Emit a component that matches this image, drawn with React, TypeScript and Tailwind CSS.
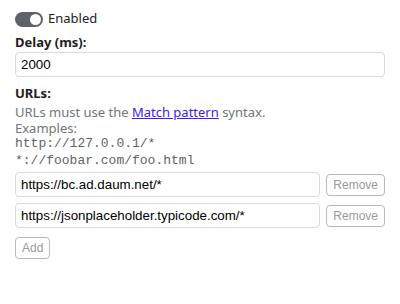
export default function App() {
  const urls = ["https://bc.ad.daum.net/*", "https://jsonplaceholder.typicode.com/*"];

  return (
    <div className="w-[400px] h-[304px] bg-white px-[15px] pt-[11px] text-[13px] text-[#202124] font-['Noto_Sans',sans-serif]">
      {/* Enabled toggle */}
      <label className="flex items-center gap-[5px] h-[16px]">
        <span className="relative w-[28px] h-[15px] rounded-full bg-[#5f6368]">
          <span className="absolute right-[2px] top-[2px] w-[11px] h-[11px] rounded-full bg-white" />
        </span>
        <span>Enabled</span>
      </label>

      {/* Delay */}
      <div className="mt-[6px] font-bold leading-[18px]">Delay (ms):</div>
      <input
        className="mt-[1px] block w-full h-[25px] px-[5px] border border-[#dadada] rounded-[4px] font-['Liberation_Sans',sans-serif] text-[13.33px] text-black outline-none"
        defaultValue="2000"
      />

      {/* URLs */}
      <div className="mt-[7px] font-bold leading-[18px]">URLs:</div>
      <div className="text-[#70757a] leading-[16px] mt-[2px]">
        <div>
          URLs must use the{" "}
          <a className="underline text-[#3b22e6]" href="#">Match pattern</a> syntax.
        </div>
        <div>Examples:</div>
        <div className="font-['Liberation_Mono',monospace] text-[#5f6368] text-[13px]">
          <div className="h-[16px] leading-[16px]">http://127.0.0.1/*</div>
          <div className="h-[16px] leading-[16px] mt-[1px]">*://foobar.com/foo.html</div>
        </div>
      </div>

      <div className="mt-[3px] flex flex-col gap-[6px]">
        {urls.map((u) => (
          <div key={u} className="flex items-center gap-[6px]">
            <input
              className="flex-1 h-[25px] px-[5px] border border-[#dadada] rounded-[4px] font-['Liberation_Sans',sans-serif] text-[13.33px] text-black outline-none"
              defaultValue={u}
            />
            <button className="h-[22px] px-[6px] border border-[#b8b8b8] rounded-[4px] font-['Liberation_Sans',sans-serif] text-[12px] text-[#9a9a9a]">
              Remove
            </button>
          </div>
        ))}
      </div>

      <button className="mt-[9px] h-[22px] px-[6px] border border-[#b8b8b8] rounded-[4px] font-['Liberation_Sans',sans-serif] text-[12px] text-[#9a9a9a]">
        Add
      </button>
    </div>
  );
}
